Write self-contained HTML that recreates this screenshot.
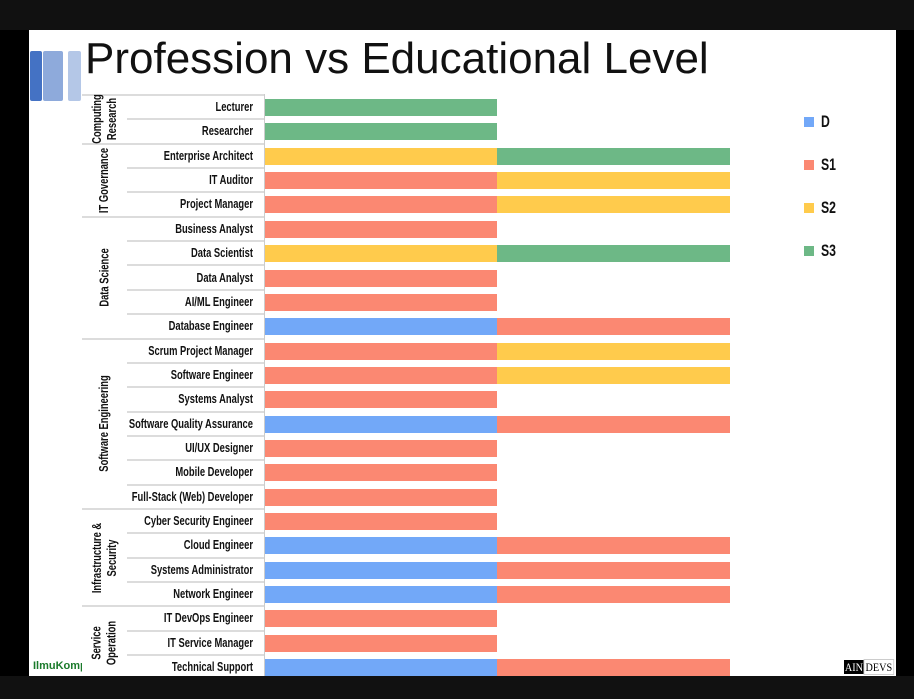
<!DOCTYPE html>
<html><head><meta charset="utf-8"><style>
*{margin:0;padding:0;box-sizing:border-box}
body{width:914px;height:699px;background:#111;position:relative;overflow:hidden;font-family:"Liberation Sans",sans-serif}
#blk{position:absolute;left:0;top:30px;width:29px;height:646px;background:#000}
#blk2{position:absolute;left:896px;top:30px;width:18px;height:646px;background:#000}
#slide{position:absolute;left:29px;top:30px;width:867px;height:646px;background:#fff;overflow:hidden}
.a{position:absolute}
.r{position:absolute;left:0;width:867px;height:24.35px}
.l{position:absolute;left:24px;width:200px;top:0;height:24.35px;line-height:24px;text-align:right;font-size:12.5px;color:#111;white-space:nowrap;font-weight:bold;transform:scaleX(0.75);transform-origin:right center}
.ln{position:absolute;left:98px;width:137px;bottom:-1px;height:2px;background:#dcdcdc}
.b{position:absolute;top:4px;height:17px}
.G{background:#6db886}.Y{background:#ffcb4c}.S{background:#fb8872}.B{background:#72a8f8}
.s1{left:236px;width:232px}.s2{left:468px;width:233px}
.g{position:absolute;left:53px;width:45px;display:flex;align-items:center;justify-content:center}
.g div{transform:rotate(-90deg) scaleX(0.75);white-space:nowrap;text-align:center;font-size:12.5px;font-weight:bold;line-height:15px;color:#111}
.gl{position:absolute;left:53px;width:182px;height:2px;background:#dcdcdc}
.lg{position:absolute;left:775px;font-size:17px;font-weight:bold;color:#111}
.lg span{display:inline-block;width:10px;height:10px;margin-right:7px}
.lg b{display:inline-block;transform:scaleX(0.72);transform-origin:left center}
</style></head><body>
<div id="blk"></div><div id="blk2"></div>
<div id="slide">
<div class="a" style="left:1px;top:21px;width:12px;height:50px;background:#4472c4;border-radius:2px"></div>
<div class="a" style="left:14px;top:21px;width:20px;height:50px;background:#8eaadb;border-radius:2px"></div>
<div class="a" style="left:39px;top:21px;width:13px;height:50px;background:#b4c7e7;border-radius:2px"></div>
<div class="a" style="left:56px;top:0px;font-size:44px;line-height:58px;color:#111;white-space:nowrap">Profession vs Educational Level</div>
<div class="a" style="left:235px;top:64px;width:1px;height:582px;background:#ccc"></div>

<div class="r" style="top:65px"><div class="l">Lecturer</div><div class="ln"></div><div class="b G s1"></div></div>
<div class="r" style="top:89.4px"><div class="l">Researcher</div><div class="b G s1"></div></div>
<div class="r" style="top:113.7px"><div class="l">Enterprise Architect</div><div class="ln"></div><div class="b Y s1"></div><div class="b G s2"></div></div>
<div class="r" style="top:138.1px"><div class="l">IT Auditor</div><div class="ln"></div><div class="b S s1"></div><div class="b Y s2"></div></div>
<div class="r" style="top:162.4px"><div class="l">Project Manager</div><div class="b S s1"></div><div class="b Y s2"></div></div>
<div class="r" style="top:186.8px"><div class="l">Business Analyst</div><div class="ln"></div><div class="b S s1"></div></div>
<div class="r" style="top:211.1px"><div class="l">Data Scientist</div><div class="ln"></div><div class="b Y s1"></div><div class="b G s2"></div></div>
<div class="r" style="top:235.5px"><div class="l">Data Analyst</div><div class="ln"></div><div class="b S s1"></div></div>
<div class="r" style="top:259.8px"><div class="l">AI/ML Engineer</div><div class="ln"></div><div class="b S s1"></div></div>
<div class="r" style="top:284.2px"><div class="l">Database Engineer</div><div class="b B s1"></div><div class="b S s2"></div></div>
<div class="r" style="top:308.5px"><div class="l">Scrum Project Manager</div><div class="ln"></div><div class="b S s1"></div><div class="b Y s2"></div></div>
<div class="r" style="top:332.9px"><div class="l">Software Engineer</div><div class="ln"></div><div class="b S s1"></div><div class="b Y s2"></div></div>
<div class="r" style="top:357.2px"><div class="l">Systems Analyst</div><div class="ln"></div><div class="b S s1"></div></div>
<div class="r" style="top:381.6px"><div class="l">Software Quality Assurance</div><div class="ln"></div><div class="b B s1"></div><div class="b S s2"></div></div>
<div class="r" style="top:405.9px"><div class="l">UI/UX Designer</div><div class="ln"></div><div class="b S s1"></div></div>
<div class="r" style="top:430.3px"><div class="l">Mobile Developer</div><div class="ln"></div><div class="b S s1"></div></div>
<div class="r" style="top:454.6px"><div class="l">Full-Stack (Web) Developer</div><div class="b S s1"></div></div>
<div class="r" style="top:479px"><div class="l">Cyber Security Engineer</div><div class="ln"></div><div class="b S s1"></div></div>
<div class="r" style="top:503.3px"><div class="l">Cloud Engineer</div><div class="ln"></div><div class="b B s1"></div><div class="b S s2"></div></div>
<div class="r" style="top:527.7px"><div class="l">Systems Administrator</div><div class="ln"></div><div class="b B s1"></div><div class="b S s2"></div></div>
<div class="r" style="top:552px"><div class="l">Network Engineer</div><div class="b B s1"></div><div class="b S s2"></div></div>
<div class="r" style="top:576.4px"><div class="l">IT DevOps Engineer</div><div class="ln"></div><div class="b S s1"></div></div>
<div class="r" style="top:600.7px"><div class="l">IT Service Manager</div><div class="ln"></div><div class="b S s1"></div></div>
<div class="r" style="top:625.1px"><div class="l">Technical Support</div><div class="b B s1"></div><div class="b S s2"></div></div>

<div class="gl" style="top:64px"></div>
<div class="gl" style="top:112.8px"></div>
<div class="gl" style="top:185.8px"></div>
<div class="gl" style="top:307.5px"></div>
<div class="gl" style="top:478px"></div>
<div class="gl" style="top:575.4px"></div>

<div class="g" style="top:65px;height:48.7px"><div>Computing<br>Research</div></div>
<div class="g" style="top:113.7px;height:73px"><div>IT Governance</div></div>
<div class="g" style="top:186.8px;height:121.7px"><div>Data Science</div></div>
<div class="g" style="top:308.5px;height:170.5px"><div>Software Engineering</div></div>
<div class="g" style="top:479px;height:97.4px"><div>Infrastructure &amp;<br>Security</div></div>
<div class="g" style="top:576.4px;height:73px"><div>Service<br>Operation</div></div>

<div class="lg" style="top:82px"><span class="B"></span><b>D</b></div>
<div class="lg" style="top:125px"><span class="S"></span><b>S1</b></div>
<div class="lg" style="top:168px"><span class="Y"></span><b>S2</b></div>
<div class="lg" style="top:211px"><span class="G"></span><b>S3</b></div>

<div class="a" style="left:4px;top:630px;font-size:11px;font-weight:bold;color:#1a7a2a;width:49px;overflow:hidden;white-space:nowrap">IlmuKomputer</div>
<div class="a" style="left:815px;top:630px;font-family:'Liberation Serif',serif;font-size:12px;white-space:nowrap;line-height:15px;transform:scaleX(0.85);transform-origin:left"><span style="background:#000;color:#fff;padding:0 1px">AIN</span><span style="border:1px solid #ccc;padding:0 1px">DEVS</span></div>
</div>
</body></html>
